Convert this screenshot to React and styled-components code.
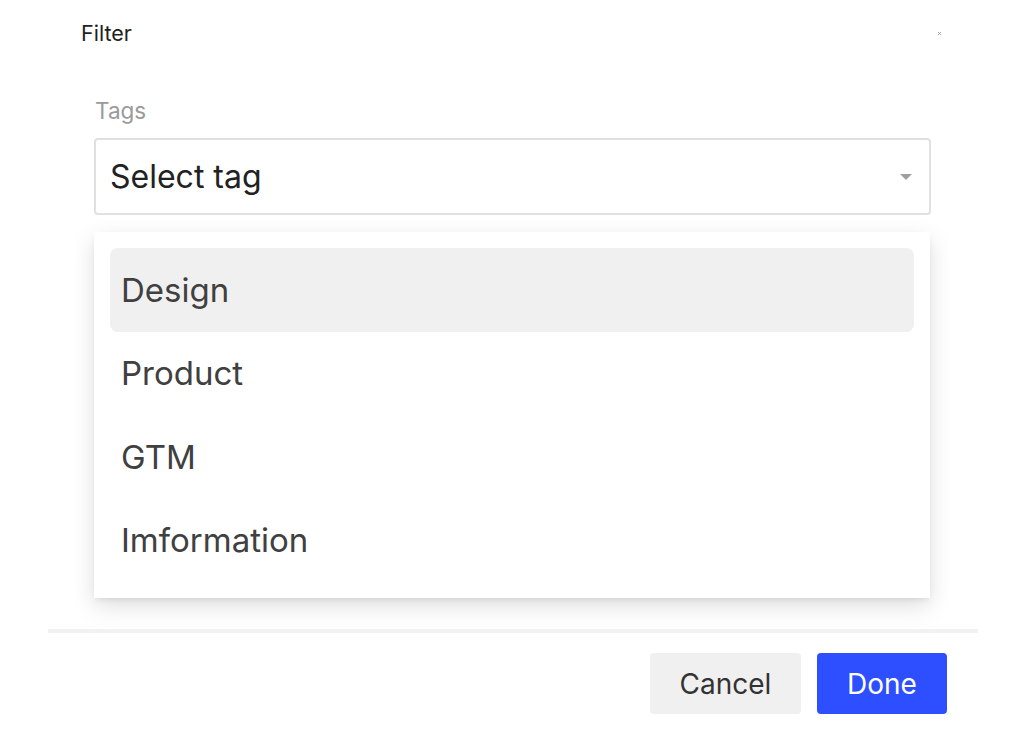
import React from "react";
import styled, { createGlobalStyle } from "styled-components";

const tags = ["Design", "Product", "GTM", "Imformation"];

function App() {
  return (
    <>
      <GlobalStyle />
      <Modal>
        <Header>
          <Title>Filter</Title>
          <Close aria-label="close">
            <svg width="5" height="5" viewBox="0 0 5 5">
              <path d="M1 1L4 4M4 1L1 4" stroke="#9a9a9a" strokeWidth="0.8" />
            </svg>
          </Close>
        </Header>
        <Body>
          <Label>Tags</Label>
          <Field>
            <Select>
              <span>Select tag</span>
              <Caret />
            </Select>
            <Menu>
              {tags.map((t, i) => (
                <Option key={t} active={i === 0}>
                  {t}
                </Option>
              ))}
            </Menu>
          </Field>
        </Body>
        <Footer>
          <Button>Cancel</Button>
          <Button primary>Done</Button>
        </Footer>
      </Modal>
    </>
  );
}

const GlobalStyle = createGlobalStyle`
  body {
    margin: 0;
    background: #fff;
    font-family: Inter, "Noto Sans", sans-serif;
  }
`;

const Modal = styled.div`
  width: 930px;
  margin: 0 0 0 48px;
`;

const Header = styled.div`
  display: flex;
  align-items: center;
  justify-content: space-between;
  height: 66px;
  padding: 0 36px 0 33px;
`;

const Title = styled.div`
  font-size: 21.5px;
  font-weight: 400;
  color: #1f1f1f;
`;

const Close = styled.button`
  border: 0;
  background: none;
  padding: 0;
  display: flex;
  cursor: pointer;
`;

const Body = styled.div`
  padding: 31px 47px 0 46px;
  height: 532px;
`;

const Label = styled.div`
  font-size: 22.5px;
  color: #9a9a9a;
  margin: 0 0 14px 1px;
`;

const Field = styled.div`
  position: relative;
`;

const Select = styled.div`
  height: 77px;
  box-sizing: border-box;
  border: 2px solid #e0e0e0;
  border-radius: 4px;
  display: flex;
  align-items: center;
  justify-content: space-between;
  padding: 0 16px 0 14px;
  font-size: 32px;
  color: #222;
`;

const Caret = styled.span`
  width: 0;
  height: 0;
  border-left: 6px solid transparent;
  border-right: 6px solid transparent;
  border-top: 6px solid #a0a0a0;
  margin-right: 1px;
`;

const Menu = styled.div`
  position: absolute;
  top: 94px;
  left: 0;
  right: 1px;
  background: #fff;
  padding: 16px;
  box-shadow: 0 8px 22px rgba(0, 0, 0, 0.13), 0 3px 6px -2px rgba(0, 0, 0, 0.1);
  z-index: 2;
`;

const Option = styled.div`
  height: 83.5px;
  display: flex;
  align-items: center;
  padding: 0 11px;
  border-radius: 8px;
  font-size: 33px;
  color: #404040;
  background: ${(p) => (p.active ? "#f0f0f0" : "transparent")};
`;

const Footer = styled.div`
  border-top: 4px solid #f2f2f2;
  display: flex;
  justify-content: flex-end;
  gap: 16px;
  padding: 20px 31px 0 0;
`;

const Button = styled.button`
  height: 61px;
  width: ${(p) => (p.primary ? "130px" : "151px")};
  padding: 0;
  border: 0;
  border-radius: 4px;
  font-family: inherit;
  font-size: 28px;
  color: ${(p) => (p.primary ? "#fff" : "#333")};
  background: ${(p) => (p.primary ? "#2d4fff" : "#f0f0f0")};
  cursor: pointer;
`;

export default App;
